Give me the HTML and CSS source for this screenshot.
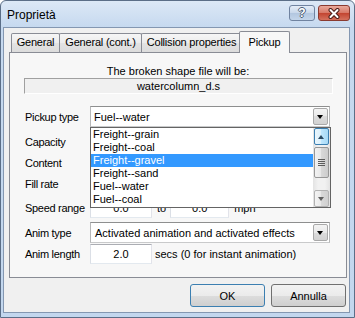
FILE: index.html
```html
<!DOCTYPE html>
<html>
<head>
	<meta charset="UTF-8">
	<link rel="stylesheet" href="styles.css">
	<title>Proprietà</title>
</head>
<body>
	<div class="window">
		<div class="titlebar">
			<span class="title">Proprietà</span>
			<div class="caption-buttons">
				<div class="cap-btn cap-help">?</div>
				<div class="cap-btn cap-close">
					<svg width="14" height="11" viewBox="0 0 14 11">
						<path d="M3.5 2 L10.5 9 M10.5 2 L3.5 9" stroke="#4a1d18" stroke-width="4" stroke-linecap="round"/>
						<path d="M3.5 2 L10.5 9 M10.5 2 L3.5 9" stroke="#ffffff" stroke-width="2" stroke-linecap="round"/>
					</svg>
				</div>
			</div>
		</div>

		<div class="client">
			<div class="tabs">
				<div class="tab tab-general">General</div>
				<div class="tab tab-general2">General (cont.)</div>
				<div class="tab tab-collision">Collision properties</div>
				<div class="tab tab-pickup active">Pickup</div>
			</div>

			<div class="panel">
				<p class="caption">The broken shape file will be:</p>
				<div class="static-field">watercolumn_d.s</div>

				<div class="row row-pickup">
					<span class="label">Pickup type</span>
					<div class="combo"><span class="combo-text">Fuel--water</span><span class="combo-arrow"></span></div>
				</div>
				<div class="row row-capacity">
					<span class="label">Capacity</span>
					<input class="field" value="0.0">
				</div>
				<div class="row row-content">
					<span class="label">Content</span>
					<input class="field" value="0.0">
				</div>
				<div class="row row-fill">
					<span class="label">Fill rate</span>
					<input class="field" value="0.0">
				</div>
				<div class="row row-speed">
					<span class="label">Speed range</span>
					<input class="field" value="0.0">
					<span class="unit unit-to">to</span>
					<input class="field field-short" value="0.0">
					<span class="unit unit-mph">mph</span>
				</div>
				<div class="row row-animtype">
					<span class="label">Anim type</span>
					<div class="combo"><span class="combo-text combo-text-wide">Activated animation and activated effects</span><span class="combo-arrow"></span></div>
				</div>
				<div class="row row-animlen">
					<span class="label">Anim length</span>
					<input class="field" value="2.0">
					<span class="unit unit-secs">secs (0 for instant animation)</span>
				</div>

				<div class="dropdown-list">
					<ul class="list-items">
						<li>Freight--grain</li>
						<li>Freight--coal</li>
						<li class="selected">Freight--gravel</li>
						<li>Freight--sand</li>
						<li>Fuel--water</li>
						<li>Fuel--coal</li>
					</ul>
					<div class="scrollbar">
						<div class="sb-btn sb-up hover"><span class="sb-arrow-up"></span></div>
						<div class="sb-thumb">
							<svg width="7" height="7" viewBox="0 0 7 7">
								<path d="M0 0.5 H7 M0 2.5 H7 M0 4.5 H7 M0 6.5 H7" stroke="#5c5c5c" stroke-width="1"/>
							</svg>
						</div>
						<div class="sb-btn sb-down"><span class="sb-arrow-down"></span></div>
					</div>
				</div>
			</div>

			<div class="dialog-buttons">
				<button class="btn btn-default">OK</button>
				<button class="btn">Annulla</button>
			</div>
		</div>
	</div>
</body>
</html>
```

FILE: styles.css
```css
body {
	margin: 0;
	font-family: "Liberation Sans", Arial, sans-serif;
	font-size: 11px;
	color: #000;
}
.window {
	box-sizing: border-box;
	width: 355px;
	height: 318px;
	border: 1px solid #5b6e87;
	border-radius: 6px 6px 0 0;
	background: linear-gradient(#dce8f6, #c6d9ef 26px, #c3d7ee);
	display: flex;
	flex-direction: column;
	overflow: hidden;
}
.titlebar {
	height: 26px;
	display: flex;
	justify-content: space-between;
	align-items: flex-start;
	padding: 0 4px 0 6px;
}
.title {
	font-size: 12px;
	line-height: 14px;
	margin-top: 7px;
}
.caption-buttons {
	display: flex;
	gap: 3px;
	margin-top: 4px;
}
.cap-btn {
	box-sizing: border-box;
	height: 16px;
	border-radius: 3px;
	display: flex;
	align-items: center;
	justify-content: center;
}
.cap-help {
	width: 26px;
	border: 1px solid #7083a0;
	background: linear-gradient(#e4edf8, #c8d7ea 50%, #b2c6df 50%, #c3d5ea);
	color: #fff;
	font-weight: bold;
	font-size: 12px;
	text-shadow: 1px 0 0 #4d5f78, -1px 0 0 #4d5f78, 0 1px 0 #4d5f78, 0 -1px 0 #4d5f78;
}
.cap-close {
	width: 32px;
	border: 1px solid #8a3a30;
	background: linear-gradient(#e9a99b, #d77766 50%, #c2432f 50%, #d4715d);
}

.client {
	flex: 1;
	margin: 0 4px 4px 2px;
	border: 1px solid #8497b1;
	background: #f0f0f0;
	padding: 3px 2px 0 5px;
	display: flex;
	flex-direction: column;
}

/* tabs */
.tabs {
	display: flex;
	align-items: flex-end;
	height: 21px;
	padding-left: 2px;
}
.tab {
	box-sizing: border-box;
	height: 19px;
	border: 1px solid #898c95;
	border-bottom: 0;
	border-radius: 2px 2px 0 0;
	background: linear-gradient(#f6f6f6, #ececec 50%, #e3e3e3 50%, #dcdcdc);
	text-align: center;
	line-height: 17px;
	letter-spacing: -0.2px;
	white-space: nowrap;
	flex-shrink: 0;
}
.tab + .tab {
	margin-left: -1px;
}
.tab-general { width: 49px; }
.tab-general2 { width: 83px; }
.tab-collision { width: 101px; }
.tab-pickup { width: 47px; }
.tab.active {
	position: relative;
	z-index: 1;
	width: 51px;
	height: 22px;
	margin-left: -3px;
	margin-bottom: -1px;
	background: #f7f7f7;
	line-height: 21px;
}

/* panel */
.panel {
	position: relative;
	box-sizing: border-box;
	height: 226px;
	border: 1px solid #898c95;
	background: #f7f7f7;
	padding: 12px 15px 0;
}
.caption {
	margin: 0;
	text-align: center;
	line-height: 13px;
}
.static-field {
	box-sizing: border-box;
	height: 16px;
	margin: 0 -2px 0 -1px;
	border: 1px solid;
	border-color: #a0a0a0 #ffffff #ffffff #a0a0a0;
	background: #f0f0f0;
	text-align: center;
	line-height: 14px;
}
.row {
	display: flex;
	align-items: center;
	height: 20px;
}
.label {
	width: 65px;
	flex-shrink: 0;
	letter-spacing: -0.3px;
	white-space: nowrap;
}
.row-pickup { margin-top: 12px; height: 21px; }
.row-capacity { margin-top: 5px; }
.row-content { margin-top: 1px; }
.row-fill { margin-top: 1px; }
.row-speed { margin-top: 3px; height: 21px; }
.row-animtype { margin-top: 4px; height: 21px; }
.row-animlen { margin-top: 1px; }

.combo {
	box-sizing: border-box;
	width: 240px;
	height: 21px;
	border: 1px solid;
	border-color: #8e8f8f #b7b8b9 #c9cacb #b7b8b9;
	background: #fff;
	display: flex;
	align-items: center;
	justify-content: space-between;
	padding: 0 1px 0 3px;
}
.combo-text-wide {
	padding-left: 1px;
}
.combo-arrow {
	box-sizing: border-box;
	width: 15px;
	height: 17px;
	border: 1px solid #a9a9a9;
	border-radius: 2px;
	background: linear-gradient(#f4f4f4, #e9e9e9 50%, #dcdcdc 50%, #d2d2d2);
	position: relative;
}
.combo-arrow::after {
	content: "";
	position: absolute;
	left: 3px;
	top: 6px;
	border-left: 3.5px solid transparent;
	border-right: 3.5px solid transparent;
	border-top: 4px solid #000;
}
.field {
	box-sizing: border-box;
	width: 62px;
	height: 20px;
	margin: 0;
	border: 1px solid;
	border-color: #abadb3 #e2e3ea #e3e9ef #dbdfe6;
	background: #fff;
	font-family: inherit;
	font-size: 11px;
	text-align: center;
	padding: 0;
}
.field-short {
	width: 59px;
}
.unit-to {
	margin: 0 4px 0 5px;
}
.unit-mph {
	margin-left: 5px;
}
.unit-secs {
	margin-left: 3px;
}

/* open dropdown list */
.dropdown-list {
	position: absolute;
	left: 80px;
	top: 74px;
	box-sizing: border-box;
	width: 241px;
	height: 81px;
	border: 1px solid #646464;
	background: #fff;
	display: flex;
}
.list-items {
	list-style: none;
	margin: 0;
	padding: 0;
	flex: 1;
}
.list-items li {
	height: 13px;
	line-height: 13px;
	padding-left: 2px;
}
.list-items li.selected {
	background: #3399ff;
	color: #fff;
}
.scrollbar {
	width: 17px;
	display: flex;
	flex-direction: column;
	align-items: center;
	background: linear-gradient(90deg, #e3e3e3, #f1f1f1 30%, #f1f1f1 70%, #e3e3e3);
}
.sb-btn {
	box-sizing: border-box;
	width: 15px;
	height: 17px;
	border: 1px solid #b2b2b2;
	border-radius: 2px;
	background: linear-gradient(90deg, #f4f4f4, #e8e8e8 50%, #d9d9d9 50%, #d0d0d0);
	position: relative;
}
.sb-btn.hover {
	border-color: #3c7fb1;
	background: linear-gradient(90deg, #eaf6fd, #d9f0fc 50%, #bee6fd 50%, #a7d9f5);
}
.sb-arrow-up,
.sb-arrow-down {
	position: absolute;
	left: 3px;
	border-left: 3.5px solid transparent;
	border-right: 3.5px solid transparent;
}
.sb-arrow-up {
	top: 6px;
	border-bottom: 4px solid #2b4a63;
}
.sb-arrow-down {
	top: 6px;
	border-top: 4px solid #606060;
}
.sb-thumb {
	box-sizing: border-box;
	width: 15px;
	height: 31px;
	margin-top: 2px;
	margin-bottom: auto;
	border: 1px solid #979797;
	border-radius: 2px;
	background: linear-gradient(90deg, #f2f2f2, #e7e7e7 50%, #d8d8d8 50%, #cccccc);
	display: flex;
	align-items: center;
	justify-content: center;
}

/* dialog buttons */
.dialog-buttons {
	display: flex;
	justify-content: flex-end;
	gap: 6px;
	margin-top: 6px;
	padding-right: 1px;
}
.btn {
	box-sizing: border-box;
	width: 75px;
	height: 23px;
	border: 1px solid #707070;
	border-radius: 3px;
	background: linear-gradient(#f2f2f2, #ebebeb 50%, #dddddd 50%, #cfcfcf);
	font-family: inherit;
	font-size: 11px;
	color: #000;
	padding: 0;
}
.btn-default {
	border-color: #3c7fb1;
}
```
